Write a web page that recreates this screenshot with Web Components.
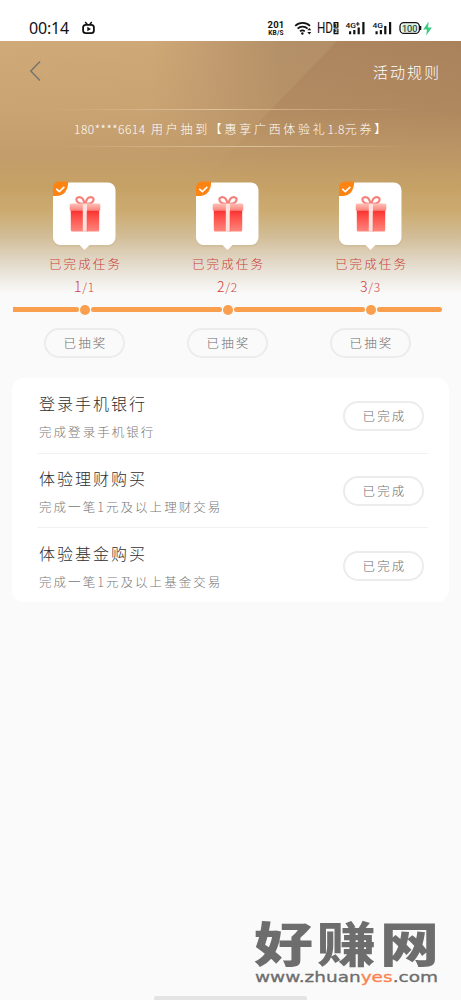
<!DOCTYPE html>
<html lang="zh-CN">
<head>
<meta charset="UTF-8">
<meta name="viewport" content="width=device-width, initial-scale=1.0">
<title>活动任务</title>
<style>
    html, body {
        margin: 0;
        padding: 0;
    }
    body {
        height: 1000px;
        overflow: hidden;
        background: #fafafa;
        font-family: "Noto Sans CJK SC", "Noto Sans", sans-serif;
        font-weight: 300;
    }
</style>
</head>
<body>
<activity-page></activity-page>

<script>
class StatusBar extends HTMLElement {
    connectedCallback() {
        this.attachShadow({ mode: 'open' });
        this.shadowRoot.innerHTML = `
            <style>
                :host {
                    display: flex;
                    box-sizing: border-box;
                    height: 41px;
                    padding: 15px 28px 0 29px;
                    background: #fff;
                    color: #111;
                    font-family: Roboto, "Noto Sans", sans-serif;
                    font-weight: 400;
                }
                .time {
                    width: 52px;
                    font: 400 16px/27px "Noto Sans", sans-serif;
                    letter-spacing: -0.2px;
                }
                .right {
                    display: flex;
                    margin-left: auto;
                    height: 27px;
                }
                .speed {
                    width: 20px;
                    margin-right: 8px;
                    padding-top: 5px;
                    font-weight: 700;
                    font-size: 9.5px;
                    line-height: 9px;
                    text-align: center;
                    letter-spacing: 0.2px;
                }
                .speed small {
                    display: block;
                    font-size: 6.5px;
                    line-height: 8px;
                }
                svg { display: block; }
            </style>
            <span class="time">00:14</span>
            <svg width="16" height="27" viewBox="81 15 16 27" fill="none" stroke="#111">
                <rect x="83.1" y="24.8" width="10.8" height="8.4" rx="2.6" stroke-width="1.8"/>
                <path d="M85.2 22l2.1 2.4M91.8 22l-2.1 2.4" stroke-width="1.5"/>
                <path d="M87.3 26.8l3.6 2.2-3.6 2.2z" fill="#111" stroke="none"/>
            </svg>
            <div class="right">
                <div class="speed">201<small>KB/S</small></div>
                <svg width="139" height="27" viewBox="294 15 139 27" fill="none" stroke="#111">
                    <path d="M295.2 25.8a10.6 10.6 0 0 1 14.8 0M297.6 28.7a7.1 7.1 0 0 1 10-.1M300 31.4a3.7 3.7 0 0 1 4.8-.1" stroke-width="1.7"/>
                    <circle cx="302.4" cy="33.5" r="1.2" fill="#111" stroke="none"/>
                    <path d="M307.3 30.3l2-2.3 2 2.3zM307.3 32.1l2 2.4 2-2.4z" fill="#111" stroke="none"/>
                    <text x="317" y="33.4" font-size="14.5" textLength="16" lengthAdjust="spacingAndGlyphs" fill="#111" stroke="none">HD</text>
                    <rect x="333.5" y="22" width="5" height="5.8" rx=".6" fill="#111" stroke="none"/>
                    <rect x="333.5" y="28.5" width="5" height="5.8" rx=".6" fill="#111" stroke="none"/>
                    <text x="334.8" y="26.9" font-size="5" font-weight="700" fill="#fff" stroke="none">1</text>
                    <text x="334.8" y="33.3" font-size="5" font-weight="700" fill="#fff" stroke="none">2</text>
                    <g fill="#111" stroke="none">
                        <text x="345.5" y="27.8" font-size="8" font-weight="500" textLength="10.5" lengthAdjust="spacingAndGlyphs">4G</text>
                        <path d="M356 23.4h1.3v-1.3h1v1.3h1.3v1h-1.3v1.3h-1v-1.3H356z"/>
                        <path d="M349 31.3h2.2v3H349zM353.2 30h2.2v4.3h-2.2zM357.6 27.5h2.2v6.8h-2.2zM362.3 22h2.2v12.3h-2.2z"/>
                        <text x="372.5" y="27.8" font-size="8" font-weight="500" textLength="10.5" lengthAdjust="spacingAndGlyphs">4G</text>
                        <path d="M375.5 31.3h2.2v3h-2.2zM379.8 30h2.2v4.3h-2.2zM384.2 26h2.2v8.3h-2.2zM389 22h2.2v12.3H389z"/>
                    </g>
                    <rect x="400" y="22.6" width="19.4" height="10.8" rx="4" stroke-width="1.3"/>
                    <rect x="420" y="26" width="1.3" height="4" fill="#111" stroke="none"/>
                    <rect x="401.8" y="24.2" width="15.8" height="7.6" rx="2.6" fill="#c9efd9" stroke="none"/>
                    <text x="401.9" y="31.6" font-size="9.5" textLength="15.6" lengthAdjust="spacingAndGlyphs" fill="#222" stroke="none">100</text>
                    <path d="M428.6 21.5l-5.4 7.9h3.8l-.8 6.2 5.7-8.2h-3.8z" fill="#3bcb83" stroke="none"/>
                </svg>
            </div>
        `;
    }
}
customElements.define('status-bar', StatusBar);

class NavBar extends HTMLElement {
    connectedCallback() {
        this.attachShadow({ mode: 'open' });
        this.shadowRoot.innerHTML = `
            <style>
                :host {
                    display: flex;
                    align-items: center;
                    justify-content: space-between;
                    height: 60px;
                    padding: 0 20px 0 28px;
                    color: #fff;
                    font-size: 15px;
                    letter-spacing: 2px;
                }
            </style>
            <svg width="16" height="24" viewBox="0 0 16 24" fill="none" stroke="#77756b" stroke-width="1.5">
                <path d="M12 2.6L2.8 12l9.2 9.4"/>
            </svg>
            <slot></slot>
        `;
    }
}
customElements.define('nav-bar', NavBar);

class WinnerTicker extends HTMLElement {
    connectedCallback() {
        this.attachShadow({ mode: 'open' });
        this.shadowRoot.innerHTML = `
            <style>
                :host {
                    display: block;
                    box-sizing: border-box;
                    height: 38px;
                    margin: 8px 50px 0;
                    padding-left: 24px;
                    color: #fff;
                    font-size: 12px;
                    line-height: 39px;
                    letter-spacing: 2.7px;
                    white-space: nowrap;
                    background:
                        linear-gradient(90deg, transparent, #dcc19a 45%, transparent) top / 100% 1px no-repeat,
                        linear-gradient(90deg, transparent, #dcc19a 55%, transparent) bottom / 100% 1px no-repeat;
                }
                ::slotted(i) {
                    font-style: normal;
                    letter-spacing: 0.5px;
                }
            </style>
            <slot></slot>
        `;
    }
}
customElements.define('winner-ticker', WinnerTicker);

class PillButton extends HTMLElement {
    connectedCallback() {
        this.attachShadow({ mode: 'open' });
        this.shadowRoot.innerHTML = `
            <style>
                :host {
                    display: block;
                    box-sizing: border-box;
                    flex: none;
                    width: 81px;
                    height: 30px;
                    border: 2px solid #ececec;
                    border-radius: 15px;
                    color: #6c6c6c;
                    font-size: 12.5px;
                    line-height: 26px;
                    letter-spacing: 2.2px;
                    text-indent: 2px;
                    text-align: center;
                }
            </style>
            <slot></slot>
        `;
    }
}
customElements.define('pill-button', PillButton);

class GiftStep extends HTMLElement {
    connectedCallback() {
        const done = this.getAttribute('done');
        const total = this.getAttribute('total');
        this.attachShadow({ mode: 'open' });
        this.shadowRoot.innerHTML = `
            <style>
                :host {
                    display: flex;
                    flex-direction: column;
                    align-items: center;
                    width: 143px;
                    color: #cb4038;
                }
                svg { display: block; }
                .label {
                    height: 24px;
                    margin-top: 2px;
                    font-size: 12.5px;
                    line-height: 24px;
                    letter-spacing: 2.1px;
                    text-indent: 2px;
                }
                .count {
                    height: 20px;
                    font-size: 12px;
                    line-height: 21px;
                    letter-spacing: 0.8px;
                }
                .count b {
                    font-size: 14px;
                    font-weight: 300;
                }
                .track {
                    display: flex;
                    align-items: center;
                    gap: 1px;
                    width: 100%;
                    height: 11px;
                    margin: 8px 0 13px;
                }
                .track i {
                    flex: 1;
                    height: 5px;
                    border-radius: 0 3px 3px 0;
                    background: #f99f4d;
                }
                .track i:last-child { border-radius: 3px 0 0 3px; }
                :host(:last-of-type) .track i:last-child { border-radius: 3px; }
                .track em {
                    width: 10px;
                    height: 10px;
                    border-radius: 50%;
                    background: #f99f4d;
                }
            </style>
            <svg width="67" height="70" viewBox="0 0 67 70">
                <defs>
                    <linearGradient id="lid" x1="0" y1="0" x2="0" y2="1">
                        <stop offset="0" stop-color="#ffc0b7"/>
                        <stop offset="1" stop-color="#fb817a"/>
                    </linearGradient>
                    <linearGradient id="box" x1="0" y1="0" x2="0" y2="1">
                        <stop offset="0" stop-color="#f92f2f"/>
                        <stop offset=".35" stop-color="#fd5049"/>
                        <stop offset="1" stop-color="#fe877f"/>
                    </linearGradient>
                </defs>
                <path d="M10 4h47a8 8 0 0 1 8 8v47a8 8 0 0 1-8 8H10a8 8 0 0 1-8-8V12a8 8 0 0 1 8-8z" fill="#b69a6c" opacity=".18"/>
                <path d="M8 2.5h49a7.5 7.5 0 0 1 7.5 7.5v47.5a7.5 7.5 0 0 1-7.5 7.5H38.5l-5 5-5-5H9.5a7.5 7.5 0 0 1-7.5-7.5V8z" fill="#fff"/>
                <path d="M2 16V7.500a6 6 0 0 1 6-6h9.200C17.200 10 13.500 16 5 16z" fill="#fd8413"/>
                <path d="M5.300 8.800l3 2.800 5-4.800" fill="none" stroke="#fff" stroke-width="1.600"/>
                <g fill="none" stroke="#f5817b" stroke-width="2.200">
                    <path d="M33.500 23.800C29 24.500 25.500 22.500 25.400 19.800c0-2.500 3.500-3.800 5.800-1.500 1.400 1.500 2 3.300 2.300 5.500z"/>
                    <path d="M34.500 23.800c4.500.7 8-1.300 8.100-4 0-2.500-3.500-3.800-5.800-1.500-1.400 1.500-2 3.300-2.300 5.500z"/>
                </g>
                <path d="M19.800 30h28.400v20a1.600 1.600 0 0 1-1.600 1.600H21.400a1.600 1.600 0 0 1-1.600-1.600z" fill="url(#box)"/>
                <rect x="18.700" y="23.600" width="30.600" height="7.200" rx="1.500" fill="url(#lid)"/>
                <path d="M31.800 23.800h4.200V51.600h-4.200z" fill="#ffe0db"/>
                <path d="M36 31v20.600" stroke="#ef5a55" stroke-width=".7" opacity=".7"/>
            </svg>
            <span class="label"><slot></slot></span>
            <span class="count"><b>${done}</b>/${total}</span>
            <div class="track"><i></i><em></em><i></i></div>
            <pill-button>已抽奖</pill-button>
        `;
    }
}
customElements.define('gift-step', GiftStep);

class TaskRow extends HTMLElement {
    connectedCallback() {
        this.attachShadow({ mode: 'open' });
        this.shadowRoot.innerHTML = `
            <style>
                :host {
                    display: flex;
                    align-items: center;
                    justify-content: space-between;
                    box-sizing: border-box;
                    height: 74.7px;
                    padding: 1px 4px 0 2px;
                    border-bottom: 1.5px solid #f1f1f1;
                }
                :host(:last-of-type) { border-bottom-color: transparent; }
                .title {
                    height: 29px;
                    color: #2e2e2e;
                    font-size: 16px;
                    line-height: 30px;
                    letter-spacing: 2px;
                }
                .desc {
                    height: 27px;
                    color: #777;
                    font-size: 12.5px;
                    line-height: 29px;
                    letter-spacing: 2.05px;
                }
            </style>
            <div>
                <div class="title">${this.getAttribute('name')}</div>
                <div class="desc"><slot></slot></div>
            </div>
            <pill-button>已完成</pill-button>
        `;
    }
}
customElements.define('task-row', TaskRow);

class SiteMark extends HTMLElement {
    connectedCallback() {
        this.attachShadow({ mode: 'open' });
        this.shadowRoot.innerHTML = `
            <style>
                :host {
                    position: absolute;
                    left: 250px;
                    top: 905px;
                }
                svg { display: block; }
            </style>
            <svg width="200" height="85" viewBox="0 -10 200 85" fill="#6d6d6d">
                <text transform="translate(4 47) scale(1 .8)" font-family="Liberation Sans, Noto Sans CJK SC, sans-serif" font-weight="900" font-size="59" textLength="185">好赚网</text>
                <text x="5" y="66.5" font-family="DejaVu Sans, sans-serif" font-weight="400" font-size="14" stroke="#6d6d6d" stroke-width=".3" textLength="183" lengthAdjust="spacingAndGlyphs">www.zhuan<tspan fill="#fa8250" stroke="#fa8250">yes</tspan>.com</text>
            </svg>
        `;
    }
}
customElements.define('site-mark', SiteMark);

class ActivityPage extends HTMLElement {
    connectedCallback() {
        this.attachShadow({ mode: 'open' });
        this.shadowRoot.innerHTML = `
            <style>
                :host {
                    display: block;
                    position: relative;
                    width: 461px;
                    height: 1000px;
                    overflow: hidden;
                }
                main {
                    height: 959px;
                    background:
                        linear-gradient(180deg, rgba(190,151,104,0) 0, rgba(190,151,104,.3) 70px, rgba(192,155,104,.85) 115px, #c6a166 145px, #ccab70 170px, #d2bd98 196px, #e2d9c9 222px, #fafafa 252px) top / 100% 252px no-repeat,
                        linear-gradient(134deg, transparent 242px, rgba(157,112,78,.3) 243px) top / 100% 252px no-repeat,
                        linear-gradient(90deg, #d0a978 0, #cfa877 150px, #b49068 280px, #af8961 100%) top / 100% 252px no-repeat,
                        #fafafa;
                }
                .steps {
                    display: flex;
                    margin: 33px 19px 0 13px;
                }
                .tasks {
                    height: 224px;
                    box-sizing: border-box;
                    margin: 20px 12px 0;
                    padding: 1px 21px 0 25px;
                    border-radius: 12px;
                    background: #fff;
                }
                .home {
                    position: absolute;
                    left: 154px;
                    bottom: 0;
                    width: 153px;
                    height: 4px;
                    border-radius: 2px 2px 0 0;
                    background: #e4e4e4;
                }
            </style>
            <status-bar></status-bar>
            <main>
                <nav-bar>活动规则</nav-bar>
                <winner-ticker><i>180****6614</i> 用户抽到【惠享广西体验礼<i>1.8</i>元券】</winner-ticker>
                <section class="steps">
                    <gift-step done="1" total="1">已完成任务</gift-step>
                    <gift-step done="2" total="2">已完成任务</gift-step>
                    <gift-step done="3" total="3">已完成任务</gift-step>
                </section>
                <section class="tasks">
                    <task-row name="登录手机银行">完成登录手机银行</task-row>
                    <task-row name="体验理财购买">完成一笔1元及以上理财交易</task-row>
                    <task-row name="体验基金购买">完成一笔1元及以上基金交易</task-row>
                </section>
            </main>
            <site-mark></site-mark>
            <div class="home"></div>
        `;
    }
}
customElements.define('activity-page', ActivityPage);
</script>
</body>
</html>
